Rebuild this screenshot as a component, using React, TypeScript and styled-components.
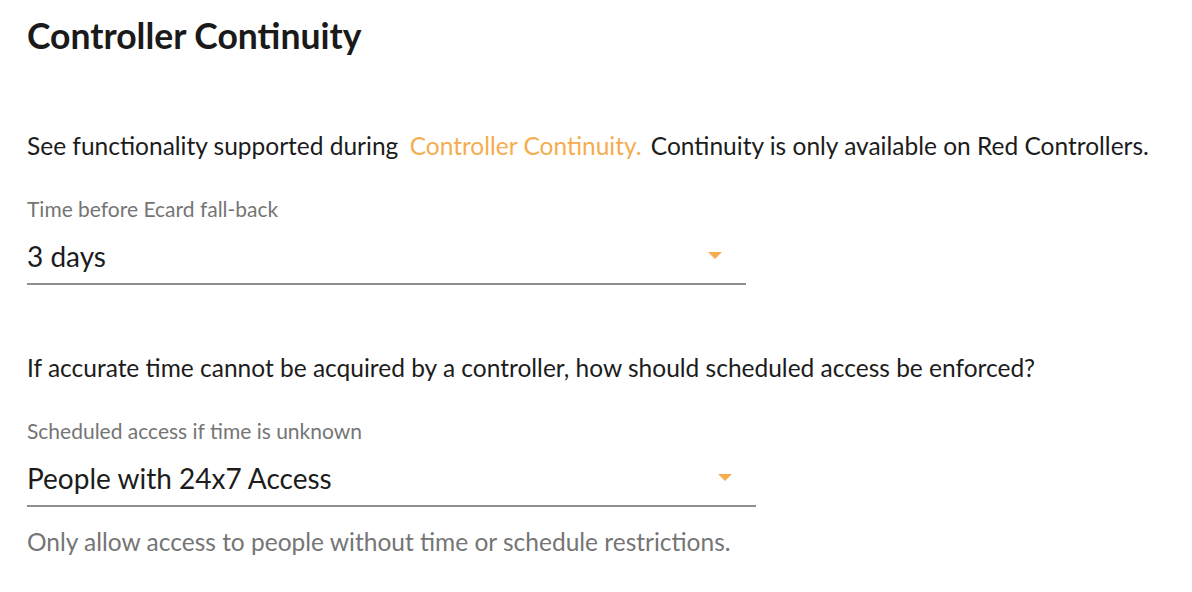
import React from 'react'
import styled, { createGlobalStyle } from 'styled-components'

const GlobalStyle = createGlobalStyle`
    body {
        margin: 0;
        background: #ffffff;
        font-family: Lato, "Noto Sans", sans-serif;
        color: #1c1c1c;
    }
`
const Page = styled.div`
    padding: 14px 27px;
`
const Title = styled.h1`
    margin: 0;
    font-size: 35.5px;
    font-weight: 700;
    line-height: 44px;
    color: #1a1a1a;
`
const Paragraph = styled.p<{ $top: number }>`
    margin: ${p => p.$top}px 0 0 0;
    font-size: 24.5px;
    line-height: 32px;
    color: #1c1c1c;
`
const Link = styled.a`
    color: #f5ad4f;
    text-decoration: none;
    margin: 0 3px 0 5px;
`
const Field = styled.div<{ $width: number }>`
    margin-top: 34px;
    width: ${p => p.$width}px;
`
const Label = styled.div`
    font-size: 21px;
    line-height: 26px;
    color: #757575;
`
const SelectBox = styled.div`
    display: flex;
    align-items: center;
    justify-content: space-between;
    padding: 17px 24px 10px 0;
    border-bottom: 2px solid #8f8f8f;
    font-size: 28px;
    line-height: 34px;
    color: #1c1c1c;
`
const Caret = styled.span`
    width: 0;
    height: 0;
    margin-bottom: 2px;
    border-left: 7px solid transparent;
    border-right: 7px solid transparent;
    border-top: 7px solid #f5ad4f;
`
const Helper = styled.div`
    margin-top: 19px;
    font-size: 24.5px;
    line-height: 32px;
    color: #757575;
`

const Select: React.FC<{ label: string; value: string; width: number }> = ({ label, value, width }) => (
    <Field $width={width}>
        <Label>{label}</Label>
        <SelectBox>
            <span>{value}</span>
            <Caret />
        </SelectBox>
    </Field>
)

const App: React.FC = () => {
    return (
        <>
            <GlobalStyle />
            <Page>
                <Title>Controller Continuity</Title>
                <Paragraph $top={72}>
                    See functionality supported during{' '}
                    <Link href="#">Controller Continuity.</Link>{' '}
                    Continuity is only available on Red Controllers.
                </Paragraph>
                <Select label="Time before Ecard fall-back" value="3 days" width={719} />
                <Paragraph $top={67}>
                    If accurate time cannot be acquired by a controller, how should scheduled access be enforced?
                </Paragraph>
                <Select label="Scheduled access if time is unknown" value="People with 24x7 Access" width={729} />
                <Helper>Only allow access to people without time or schedule restrictions.</Helper>
            </Page>
        </>
    )
}

export default App
